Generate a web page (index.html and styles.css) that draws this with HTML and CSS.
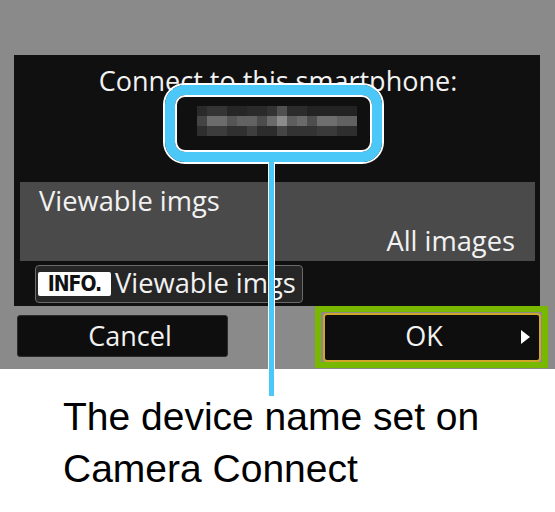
FILE: index.html
```html
<!DOCTYPE html>
<html>
<head>
<meta charset="utf-8">
<link rel="stylesheet" href="styles.css">
</head>
<body>
<div class="figure">
  <div class="screen">
    <div class="panel">
      <div class="title">Connect to this smartphone:</div>
      <div class="device">
        <svg class="device-name" width="160" height="30" viewBox="0 0 160 30">
          <rect x="0" y="0" width="160" height="30" fill="#161616"/>
          <rect x="0" y="0" width="10" height="10" fill="#2a2a2a"/>
          <rect x="10" y="0" width="20" height="10" fill="#343434"/>
          <rect x="30" y="0" width="20" height="10" fill="#262626"/>
          <rect x="50" y="0" width="20" height="10" fill="#2a2a2a"/>
          <rect x="70" y="0" width="10" height="10" fill="#333"/>
          <rect x="80" y="0" width="10" height="10" fill="#505050"/>
          <rect x="90" y="0" width="20" height="10" fill="#2c2c2c"/>
          <rect x="110" y="0" width="50" height="10" fill="#232323"/>
          <rect x="0" y="10" width="10" height="10" fill="#444"/>
          <rect x="10" y="10" width="20" height="10" fill="#6c6c6c"/>
          <rect x="30" y="10" width="10" height="10" fill="#555"/>
          <rect x="40" y="10" width="20" height="10" fill="#626262"/>
          <rect x="60" y="10" width="10" height="10" fill="#4c4c4c"/>
          <rect x="70" y="10" width="10" height="10" fill="#6a6a6a"/>
          <rect x="80" y="10" width="10" height="10" fill="#8c8c8c"/>
          <rect x="90" y="10" width="10" height="10" fill="#5e5e5e"/>
          <rect x="100" y="10" width="10" height="10" fill="#6a6a6a"/>
          <rect x="110" y="10" width="10" height="10" fill="#4e4e4e"/>
          <rect x="120" y="10" width="20" height="10" fill="#6e6e6e"/>
          <rect x="140" y="10" width="20" height="10" fill="#616161"/>
          <rect x="0" y="20" width="10" height="10" fill="#2e2e2e"/>
          <rect x="10" y="20" width="20" height="10" fill="#3c3c3c"/>
          <rect x="30" y="20" width="20" height="10" fill="#303030"/>
          <rect x="50" y="20" width="10" height="10" fill="#3e3e3e"/>
          <rect x="60" y="20" width="20" height="10" fill="#2c2c2c"/>
          <rect x="80" y="20" width="10" height="10" fill="#454545"/>
          <rect x="90" y="20" width="30" height="10" fill="#333"/>
          <rect x="120" y="20" width="20" height="10" fill="#3a3a3a"/>
          <rect x="140" y="20" width="20" height="10" fill="#2e2e2e"/>
        </svg>
      </div>
      <div class="setting">
        <div class="setting-label">Viewable imgs</div>
        <div class="setting-value">All images</div>
      </div>
      <div class="info">
        <span class="info-key">INFO.</span>
        <span class="info-text">Viewable imgs</span>
      </div>
    </div>
    <div class="controls">
      <div class="btn btn-cancel">Cancel</div>
      <div class="focus">
        <div class="btn btn-ok">OK<span class="arrow"></span></div>
      </div>
    </div>
  </div>
  <div class="caption">The device name set on<br>Camera Connect</div>
  <div class="callout"><div class="callout-ring"><div class="callout-inner"></div></div></div>
  <div class="leader"></div>
</div>
</body>
</html>
```

FILE: styles.css
```css
* { box-sizing: border-box; }
html, body { margin: 0; padding: 0; background: #ffffff; }
.figure {
  position: relative;
  width: 555px;
  height: 512px;
  overflow: hidden;
}
.screen {
  height: 369px;
  background: #8a8a8a;
  padding-top: 55px;
  font-family: "Open Sans", "Noto Sans", sans-serif;
  color: #f2f2f2;
}
.panel {
  margin-left: 14px;
  width: 526px;
  height: 251px;
  background: #101010;
  padding-top: 8px;
  display: flex;
  flex-direction: column;
}
.title {
  font-size: 27px;
  line-height: 36px;
  height: 36px;
  text-align: center;
  padding-left: 2px;
}
.device {
  height: 83px;
  padding-top: 7px;
  padding-left: 183px;
}
.device-name { display: block; }
.setting {
  margin: 0 5px 0 6px;
  height: 79px;
  background: #4a4a4a;
  padding: 1px 20px 0 19px;
  display: flex;
  flex-direction: column;
  gap: 4px;
  font-size: 27.3px;
  line-height: 36px;
}
.setting-value { text-align: right; }
.info {
  margin: 4px 0 0 21px;
  width: 268px;
  height: 38px;
  border: 1.5px solid #6a6a6a;
  border-radius: 4px;
  background: #262626;
  display: flex;
  align-items: center;
  padding-left: 2px;
  gap: 4px;
}
.info-key {
  background: #ffffff;
  color: #111;
  font-family: "DejaVu Sans Condensed", "Liberation Sans", sans-serif;
  font-weight: bold;
  font-size: 21px;
  letter-spacing: -1px;
  height: 24px;
  width: 73px;
  line-height: 24px;
  text-align: center;
  border-radius: 2px;
  flex: none;
}
.info-text {
  font-size: 27.3px;
  line-height: 30px;
  padding-bottom: 3px;
  white-space: nowrap;
}
.controls {
  display: flex;
  justify-content: space-between;
  align-items: flex-start;
  height: 63px;
}
.btn {
  background: #0e0e0e;
  display: flex;
  align-items: center;
  justify-content: center;
  font-size: 27px;
  line-height: 36px;
}
.btn-cancel {
  margin: 9px 0 0 17px;
  width: 211px;
  height: 42px;
  border: 1px solid #2c2c2c;
  border-radius: 3px;
  padding-left: 15px;
  padding-bottom: 1px;
}
.focus {
  margin-right: 7px;
  width: 233px;
  height: 62px;
  border: 6px solid #78b800;
  padding: 1px 1px 0 2px;
}
.btn-ok {
  position: relative;
  height: 49px;
  border: 2px solid #cfa52a;
  border-radius: 4px;
  padding-right: 16px;
  padding-bottom: 4px;
}
.arrow {
  position: absolute;
  right: 9px;
  top: 15px;
  width: 0;
  height: 0;
  border-left: 9px solid #ffffff;
  border-top: 7px solid transparent;
  border-bottom: 7px solid transparent;
}
.caption {
  padding: 22px 0 0 63px;
  font-family: "Liberation Sans", Arial, sans-serif;
  font-size: 39px;
  line-height: 52px;
  color: #000;
}
.callout {
  position: absolute;
  left: 163px;
  top: 83px;
  width: 221px;
  height: 81px;
  border: 2px solid #ffffff;
  border-radius: 22px;
}
.callout-ring {
  width: 100%;
  height: 100%;
  border: 10px solid #4cc8f8;
  border-radius: 20px;
}
.callout-inner {
  width: 100%;
  height: 100%;
  border: 2px solid #ffffff;
  border-radius: 10px;
}
.leader {
  position: absolute;
  left: 268px;
  top: 162px;
  width: 7px;
  height: 234px;
  background: #4cc8f8;
  border-left: 1px solid #ffffff;
  border-right: 1px solid #ffffff;
}
```
